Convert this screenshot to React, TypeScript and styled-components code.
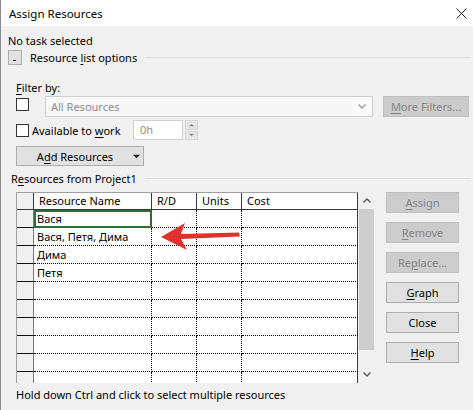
import React from "react";
import styled, { createGlobalStyle, css } from "styled-components";

const GlobalStyle = createGlobalStyle`
  html, body {
    margin: 0;
    padding: 0;
    background: #f0f0f0;
  }
  body {
    font-family: "Segoe UI", "Noto Sans", sans-serif;
    font-size: 11px;
    color: #000;
  }
`;

const Window = styled.div`
  width: 473px;
  height: 410px;
  box-sizing: border-box;
  border-left: 1px solid #8a8a8a;
  background: #f0f0f0;
  display: flex;
  flex-direction: column;
  overflow: hidden;
`;

const TitleBar = styled.div`
  height: 26px;
  flex: none;
  background: #fff;
  display: flex;
  align-items: center;
  justify-content: space-between;
  padding: 0 6px 0 8px;
`;

const Title = styled.span`
  line-height: 15px;
  font-size: 11.5px;
`;

const Content = styled.div`
  display: flex;
  flex-direction: column;
  padding-left: 7px;
`;

const Line = styled.div<{ $top?: number; $indent?: number }>`
  line-height: 15px;
  height: 15px;
  margin-top: ${(p) => p.$top ?? 0}px;
  padding-left: ${(p) => p.$indent ?? 0}px;
  white-space: nowrap;
`;

const SectionHeader = styled.div<{ $top: number; $indent?: number }>`
  display: flex;
  align-items: center;
  gap: 8px;
  height: 15px;
  margin-top: ${(p) => p.$top}px;
  padding-left: ${(p) => p.$indent ?? 0}px;
  white-space: nowrap;
`;

const Rule = styled.div`
  flex: 1;
  height: 1px;
  background: #dcdcdc;
  margin-right: 2px;
`;

const Toggle = styled.div`
  width: 14px;
  height: 15px;
  box-sizing: border-box;
  border: 1px solid #adadad;
  background: #e1e1e1;
  position: relative;
  flex: none;

  &::after {
    content: "";
    position: absolute;
    left: 4px;
    top: 9px;
    width: 3px;
    height: 1px;
    background: #222;
  }
`;

const Group = styled.div`
  display: flex;
  flex-direction: column;
  padding-left: 8px;
`;

const Row = styled.div<{ $top: number }>`
  display: flex;
  align-items: flex-start;
  margin-top: ${(p) => p.$top}px;
`;

const CheckBox = styled.div<{ $top: number }>`
  width: 13px;
  height: 13px;
  box-sizing: border-box;
  border: 1px solid #333;
  background: #fff;
  flex: none;
  margin-top: ${(p) => p.$top}px;
`;

const Select = styled.div`
  margin-left: 16px;
  width: 328px;
  height: 21px;
  box-sizing: border-box;
  border: 1px solid #cfcfcf;
  background: #f7f7f7;
  display: flex;
  align-items: center;
  color: #8d8d8d;
  padding-left: 5px;
`;

const SelectText = styled.span`
  flex: 1;
`;

const SelectArrow = styled.div`
  width: 20px;
  height: 19px;
  background: #fafafa;
  display: flex;
  align-items: center;
  justify-content: center;
`;

const Button = styled.div<{ $disabled?: boolean; $width: number; $height?: number }>`
  width: ${(p) => p.$width}px;
  height: ${(p) => p.$height ?? 21}px;
  box-sizing: border-box;
  display: flex;
  align-items: center;
  justify-content: center;
  flex: none;
  white-space: nowrap;
  ${(p) =>
    p.$disabled
      ? css`
          background: #cccccc;
          border: 1px solid #bfbfbf;
          color: #838383;
        `
      : css`
          background: #e1e1e1;
          border: 1px solid #adadad;
          color: #000;
        `}
`;

const FilterButton = styled(Button)`
  margin-left: 10px;
`;

const Label = styled.span`
  margin-left: 3px;
  line-height: 15px;
  white-space: nowrap;
`;

const WorkInput = styled.div`
  width: 50px;
  height: 20px;
  box-sizing: border-box;
  border: 1px solid #d0d0d0;
  background: #fff;
  color: #8d8d8d;
  padding-left: 6px;
  line-height: 18px;
`;

const LabelCell = styled.div`
  width: 117px;
  height: 20px;
  display: flex;
  align-items: center;
`;

const Spinner = styled.div`
  margin-left: 2px;
  width: 13px;
  height: 20px;
  display: flex;
  flex-direction: column;
  gap: 1px;
`;

const SpinHalf = styled.div`
  flex: 1;
  background: #e6e6e6;
  border: 1px solid #d6d6d6;
  display: flex;
  align-items: center;
  justify-content: center;
`;

const SplitButton = styled(Button)`
  justify-content: flex-start;
`;

const SplitLabel = styled.span`
  width: 116px;
  text-align: center;
`;

const Main = styled.div`
  display: flex;
  margin-top: 6px;
  padding-left: 8px;
`;

const GridFrame = styled.div`
  position: relative;
  display: flex;
  height: 191px;
  overflow: hidden;
`;

const Table = styled.div`
  border-top: 1px solid #a0a0a0;
  border-left: 1px solid #a0a0a0;
  background: #fff;
  display: flex;
  flex-direction: column;
`;

const TRow = styled.div<{ $head?: boolean }>`
  display: flex;
  height: ${(p) => (p.$head ? 17 : 18)}px;
  flex: none;
`;

const widths = [17, 118, 45, 45, 116];

const HeadCell = styled.div<{ $w: number; $corner?: boolean }>`
  width: ${(p) => p.$w}px;
  box-sizing: border-box;
  border-right: 1px solid #3a3a3a;
  border-bottom: 1px solid #3a3a3a;
  background: ${(p) => (p.$corner ? "#f0f0f0" : "#fff")};
  padding-left: 5px;
  line-height: 16px;
  white-space: nowrap;
`;

const RowHead = styled.div`
  width: 17px;
  box-sizing: border-box;
  background: #f0f0f0;
  border-right: 1px solid #7a7a7a;
  border-bottom: 1px solid #111;
`;

const Cell = styled.div<{ $w: number; $last?: boolean; $selected?: boolean }>`
  position: relative;
  width: ${(p) => p.$w}px;
  box-sizing: border-box;
  border-right: 1px ${(p) => (p.$last ? "solid #3a3a3a" : "dotted #000")};
  border-bottom: 1px dotted #000;
  padding-left: 3px;
  line-height: 17px;
  white-space: nowrap;
  overflow: hidden;

  ${(p) =>
    p.$selected &&
    css`
      &::after {
        content: "";
        position: absolute;
        left: 0;
        top: 0;
        right: -1px;
        bottom: -1px;
        border: 2px solid #2f6e33;
      }
      overflow: visible;
    `}
`;

const ScrollBar = styled.div`
  width: 17px;
  background: #f0f0f0;
  display: flex;
  flex-direction: column;
  align-items: center;
`;

const ScrollArrow = styled.div`
  height: 17px;
  width: 17px;
  display: flex;
  align-items: center;
  justify-content: center;
  flex: none;
`;

const Thumb = styled.div`
  width: 15px;
  height: 141px;
  background: #cdcdcd;
  flex: none;
`;

const ScrollSpace = styled.div`
  flex: 1;
`;

const Arrow = styled.svg`
  position: absolute;
  left: 139px;
  top: 27px;
`;

const ButtonColumn = styled.div`
  margin-left: 11px;
  display: flex;
  flex-direction: column;
  gap: 9px;
`;

const U = styled.span`
  text-decoration: underline;
  text-underline-offset: 2px;
`;

const rows = ["Вася", "Вася, Петя, Дима", "Дима", "Петя", "", "", "", "", "", ""];

const Chevron = ({ up, color = "#5a5a5a" }: { up?: boolean; color?: string }) => (
  <svg width="8" height="5" viewBox="0 0 8 5">
    <path
      d={up ? "M0.5 4.5 L4 1 L7.5 4.5" : "M0.5 0.5 L4 4 L7.5 0.5"}
      fill="none"
      stroke={color}
      strokeWidth="1.4"
    />
  </svg>
);

const Tri = ({ up, size = 7, color = "#222" }: { up?: boolean; size?: number; color?: string }) => (
  <svg width={size} height={Math.ceil(size / 2) + 1} viewBox={`0 0 ${size} ${size / 2 + 1}`}>
    <path
      d={
        up
          ? `M0 ${size / 2 + 0.5} L${size / 2} 0.5 L${size} ${size / 2 + 0.5}Z`
          : `M0 0.5 L${size} 0.5 L${size / 2} ${size / 2 + 0.5}Z`
      }
      fill={color}
    />
  </svg>
);

export default function App() {
  return (
    <>
      <GlobalStyle />
      <Window>
        <TitleBar>
          <Title>Assign Resources</Title>
          <svg width="11" height="11" viewBox="0 0 11 11">
            <path d="M0.5 0.5 L10.5 10.5 M10.5 0.5 L0.5 10.5" stroke="#222" strokeWidth="1" />
          </svg>
        </TitleBar>
        <Content>
          <Line $top={7}>No task selected</Line>
          <SectionHeader $top={2}>
            <Toggle />
            <span>
              Resource <U>l</U>ist options
            </span>
            <Rule />
          </SectionHeader>
          <Group>
            <Line $top={15}>
              <U>F</U>ilter by:
            </Line>
            <Row $top={1}>
              <CheckBox $top={2} />
              <Select>
                <SelectText>All Resources</SelectText>
                <SelectArrow>
                  <Chevron color="#9a9a9a" />
                </SelectArrow>
              </Select>
              <FilterButton $disabled $width={86}>
                <span>
                  <U>M</U>ore Filters...
                </span>
              </FilterButton>
            </Row>
            <Row $top={3}>
              <LabelCell>
                <CheckBox $top={0} />
                <Label>
                  Available to <U>w</U>ork
                </Label>
              </LabelCell>
              <WorkInput>0h</WorkInput>
              <Spinner>
                <SpinHalf>
                  <Tri up size={5} color="#8a8a8a" />
                </SpinHalf>
                <SpinHalf>
                  <Tri size={5} color="#8a8a8a" />
                </SpinHalf>
              </Spinner>
            </Row>
            <Row $top={6}>
              <SplitButton $width={128} $height={20}>
                <SplitLabel>
                  A<U>d</U>d Resources
                </SplitLabel>
                <Tri size={7} />
              </SplitButton>
            </Row>
          </Group>
          <SectionHeader $top={5} $indent={3}>
            <span>
              R<U>e</U>sources from Project1
            </span>
            <Rule />
          </SectionHeader>
          <Main>
            <GridFrame>
              <Table>
                <TRow $head>
                  <HeadCell $w={widths[0]} $corner />
                  <HeadCell $w={widths[1]}>Resource Name</HeadCell>
                  <HeadCell $w={widths[2]}>R/D</HeadCell>
                  <HeadCell $w={widths[3]}>Units</HeadCell>
                  <HeadCell $w={widths[4]}>Cost</HeadCell>
                </TRow>
                {rows.map((name, i) => (
                  <TRow key={i}>
                    <RowHead />
                    <Cell $w={widths[1]} $selected={i === 0}>
                      {name}
                    </Cell>
                    <Cell $w={widths[2]} />
                    <Cell $w={widths[3]} />
                    <Cell $w={widths[4]} $last />
                  </TRow>
                ))}
              </Table>
              <ScrollBar>
                <ScrollArrow>
                  <Chevron up />
                </ScrollArrow>
                <Thumb />
                <ScrollSpace />
                <ScrollArrow>
                  <Chevron />
                </ScrollArrow>
              </ScrollBar>
              <Arrow width="90" height="34" viewBox="0 0 90 34">
                <path d="M6 18 L30 4 L26 15 L84 13.5 L85 17.5 L26 20 L32 31 Z" fill="#e0312c" />
              </Arrow>
            </GridFrame>
            <ButtonColumn>
              <Button $disabled $width={73}>
                <span>
                  <U>A</U>ssign
                </span>
              </Button>
              <Button $disabled $width={73}>
                <span>
                  <U>R</U>emove
                </span>
              </Button>
              <Button $disabled $width={73}>
                <span>
                  Re<U>p</U>lace...
                </span>
              </Button>
              <Button $width={73}>
                <span>
                  <U>G</U>raph
                </span>
              </Button>
              <Button $width={73}>Close</Button>
              <Button $width={73}>
                <span>
                  <U>H</U>elp
                </span>
              </Button>
            </ButtonColumn>
          </Main>
          <Line $top={4} $indent={8}>
            Hold down Ctrl and click to select multiple resources
          </Line>
        </Content>
      </Window>
    </>
  );
}
